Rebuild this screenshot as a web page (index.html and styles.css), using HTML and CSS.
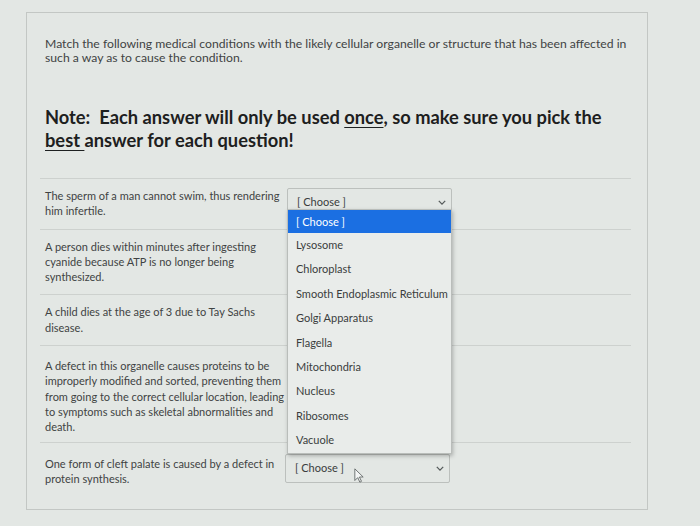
FILE: index.html
```html
<!DOCTYPE html>
<html lang="en">
<head>
    <meta charset="UTF-8">
    <title>Quiz question</title>
    <link rel="stylesheet" href="styles.css">
</head>
<body>
    <div class="card">
        <p class="intro">Match the following medical conditions with the likely cellular organelle or structure that has been affected in such a way as to cause the condition.</p>

        <p class="note">Note:&nbsp; Each answer will only be used <u>once</u>, so make sure you pick the <u>best </u>answer for each question!</p>

        <div class="questions">
            <div class="row">
                <div class="prompt">The sperm of a man cannot swim, thus rendering him infertile.</div>
                <div class="select open">
                    <span>[ Choose ]</span>
                    <svg class="chevron" viewBox="0 0 10 6"><path d="M1 1l4 4 4-4" /></svg>
                    <ul class="options">
                        <li class="active">[ Choose ]</li>
                        <li>Lysosome</li>
                        <li>Chloroplast</li>
                        <li>Smooth Endoplasmic Reticulum</li>
                        <li>Golgi Apparatus</li>
                        <li>Flagella</li>
                        <li>Mitochondria</li>
                        <li>Nucleus</li>
                        <li>Ribosomes</li>
                        <li>Vacuole</li>
                    </ul>
                </div>
            </div>
            <div class="row">
                <div class="prompt">A person dies within minutes after ingesting cyanide because ATP is no longer being synthesized.</div>
            </div>
            <div class="row">
                <div class="prompt">A child dies at the age of 3 due to Tay Sachs disease.</div>
            </div>
            <div class="row">
                <div class="prompt">A defect in this organelle causes proteins to be improperly modified and sorted, preventing them from going to the correct cellular location, leading to symptoms such as skeletal abnormalities and death.</div>
            </div>
            <div class="row last">
                <div class="prompt">One form of cleft palate is caused by a defect in protein synthesis.</div>
                <div class="select">
                    <span>[ Choose ]</span>
                    <svg class="chevron" viewBox="0 0 10 6"><path d="M1 1l4 4 4-4" /></svg>
                    <svg class="cursor" viewBox="0 0 12 18"><path d="M1 1v14l3.5-3.5 2.5 5.5 2-1-2.5-5.2H11z" /></svg>
                </div>
            </div>
        </div>
    </div>
</body>
</html>
```

FILE: styles.css
```css
* {
    margin: 0;
    padding: 0;
    box-sizing: border-box;
}

body {
    font-family: Lato, "Noto Sans", sans-serif;
    background: #e3e7e4;
    color: #3f4343;
    padding: 12px 0 0 26px;
}

.card {
    width: 622px;
    height: 498px;
    border: 1px solid #c3c7c4;
    padding: 24px 16px 0 13px;
}

.intro {
    padding-left: 5px;
    font-size: 12.2px;
    line-height: 14px;
    width: 600px;
}

.note {
    padding-left: 5px;
    margin-top: 41px;
    font-size: 18.3px;
    font-weight: 700;
    line-height: 23px;
    color: #1d2020;
    width: 590px;
}

.note u {
    text-underline-offset: 3px;
    text-decoration-thickness: 1px;
}

.questions {
    margin-top: 26px;
    border-top: 1px solid #cdd1ce;
}

.row {
    display: flex;
    align-items: flex-start;
    padding: 8px 0 10px 5px;
    border-bottom: 1px solid #cdd1ce;
    font-size: 11px;
    line-height: 15.3px;
}

.row:nth-child(4) {
    padding-top: 11px;
    padding-bottom: 7px;
}

.row.last {
    border-bottom: none;
    padding-top: 12px;
}

.prompt {
    width: 240px;
    padding-top: 1px;
}

.select {
    position: relative;
    display: flex;
    align-items: center;
    justify-content: space-between;
    width: 165px;
    height: 29px;
    margin-left: 2px;
    padding: 0 5px 0 9px;
    border: 1px solid #bcc0bd;
    border-radius: 2px;
    color: #3a3d3d;
}

.select.open {
    align-items: flex-start;
    padding-top: 5px;
    margin-top: 1px;
}

.row.last .select {
    margin-top: -1px;
    margin-left: 0;
}

.chevron {
    width: 8px;
    height: 5px;
    fill: none;
    stroke: #555a5a;
    stroke-width: 1.6;
}

.select.open .chevron {
    margin-top: 6px;
}

.options {
    position: absolute;
    top: 20px;
    left: -1px;
    width: 165px;
    list-style: none;
    background: #e9ecea;
    border: 1px solid #b9bdba;
    box-shadow: 1px 2px 4px rgba(0, 0, 0, 0.25);
    z-index: 2;
}

.options li {
    height: 24.4px;
    line-height: 24.4px;
    padding-left: 8px;
    white-space: nowrap;
}

.options li.active {
    background: #1b6fe2;
    color: #ffffff;
    height: 23px;
    line-height: 23px;
}

.cursor {
    position: absolute;
    left: 68px;
    top: 13px;
    width: 10px;
    height: 15px;
    fill: #f4f6f5;
    stroke: #5a5f5f;
    stroke-width: 1;
}
```
